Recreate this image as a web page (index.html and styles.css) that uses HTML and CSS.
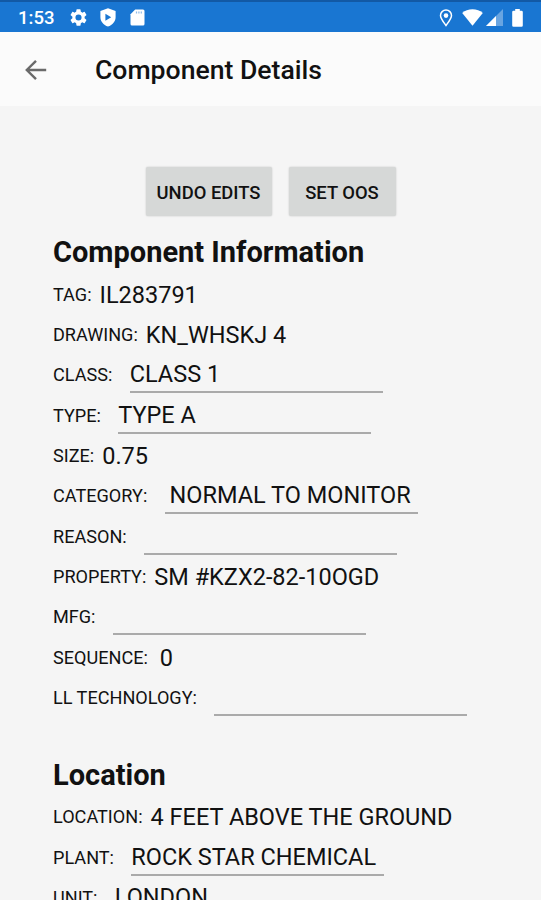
FILE: index.html
```html
<!DOCTYPE html>
<html lang="en">

<head>
  <meta charset="utf-8">
  <meta name="viewport" content="width=device-width">
  <title>Component Details</title>
  <link rel="stylesheet" href="styles.css">
</head>

<body>
  <div class="status">
    <span class="time">1:53</span>
    <svg class="gear" width="17" height="17" viewBox="2 2 20 20"><path fill="#fff" d="M19.14 12.94c.04-.3.06-.61.06-.94s-.02-.64-.07-.94l2.03-1.58a.49.49 0 0 0 .12-.61l-1.92-3.32a.49.49 0 0 0-.59-.22l-2.39.96a7 7 0 0 0-1.62-.94l-.36-2.54a.48.48 0 0 0-.48-.41h-3.84a.48.48 0 0 0-.47.41l-.36 2.54c-.59.24-1.13.57-1.62.94l-2.39-.96a.48.48 0 0 0-.59.22L2.74 8.87a.48.48 0 0 0 .12.61l2.03 1.58c-.05.3-.09.63-.09.94s.02.64.07.94l-2.03 1.58a.49.49 0 0 0-.12.61l1.92 3.32c.12.22.37.29.59.22l2.39-.96c.5.38 1.03.7 1.62.94l.36 2.54c.05.24.24.41.48.41h3.84c.24 0 .44-.17.47-.41l.36-2.54c.59-.24 1.13-.56 1.62-.94l2.39.96c.22.08.47 0 .59-.22l1.92-3.32a.48.48 0 0 0-.12-.61zM12 15.6a3.6 3.6 0 1 1 0-7.2 3.6 3.6 0 0 1 0 7.2z"/></svg>
    <svg class="shield" width="16" height="19" viewBox="0 0 16 19"><path fill="#fff" fill-rule="evenodd" d="M8 .3 15.6 3v6.2c0 4.2-3 7.6-7.6 9.4C3.4 16.800.4 13.4.4 9.2V3zM5.4 5.7v7l5.8-3.5z"/></svg>
    <svg class="sd" width="15" height="17" viewBox="0 0 15 17"><path fill="#fff" d="M5.2.5H13A1.5 1.5 0 0 1 14.5 2v13a1.5 1.5 0 0 1-1.5 1.5H2A1.5 1.5 0 0 1 .5 15V5.2z"/><path stroke="#1976d2" stroke-opacity=".5" stroke-width="1.2" d="M6.5 2.5v2M8.900 2.5v2M11.3 2.5v2"/></svg>
    <span class="space"></span>
    <svg class="pin" width="14" height="18" viewBox="0 0 14 18"><path fill="none" stroke="#fff" stroke-width="1.5" d="M7 16.500C4 12.500 1.500 9.500 1.500 6.500a5.500 5.500 0 0 1 11 0c0 3-2.500 6-5.500 10z"/><circle cx="7" cy="6.6" r="2.3" fill="#fff"/></svg>
    <svg class="wifi" width="21" height="17" viewBox="0 0 21 17"><path fill="#fff" d="M10.500 16.800.2 3.900C3 1.600 6.500.3 10.500.3s7.500 1.300 10.300 3.600z"/></svg>
    <svg class="signal" width="17" height="17" viewBox="0 0 17 17"><path fill="#fff" opacity=".35" d="M17 0v17H0z"/><path fill="#fff" d="M10 7v10H0z"/></svg>
    <svg class="battery" width="11" height="18" viewBox="0 0 11 18"><path fill="#fff" d="M3.200 0h4.600v1.800h1.700A1.300 1.300 0 0 1 10.800 3v13.500a1.300 1.300 0 0 1-1.300 1.300h-8A1.300 1.300 0 0 1 .2 16.500V3a1.300 1.300 0 0 1 1.300-1.200h1.700z"/></svg>
  </div>

  <header class="toolbar">
    <svg width="22" height="20" viewBox="0 0 22 20"><path fill="none" stroke="#6a6a6a" stroke-width="2.4" d="M21.200 10H1.800M11 .9 1.800 10l9.200 9.100"/></svg>
    <h1>Component Details</h1>
  </header>

  <main>
    <div class="buttons">
      <button class="undo">UNDO EDITS</button>
      <button class="oos">SET OOS</button>
    </div>

    <section>
      <h2>Component Information</h2>
      <div class="row"><label>TAG:</label><span class="value">IL283791</span></div>
      <div class="row"><label>DRAWING:</label><span class="value">KN_WHSKJ 4</span></div>
      <div class="row"><label>CLASS:</label><span class="picker">CLASS 1</span></div>
      <div class="row"><label>TYPE:</label><span class="picker">TYPE A</span></div>
      <div class="row"><label>SIZE:</label><span class="value">0.75</span></div>
      <div class="row"><label>CATEGORY:</label><span class="picker wide">NORMAL TO MONITOR</span></div>
      <div class="row"><label>REASON:</label><span class="picker"></span></div>
      <div class="row"><label>PROPERTY:</label><span class="value">SM #KZX2-82-10OGD</span></div>
      <div class="row"><label>MFG:</label><span class="picker"></span></div>
      <div class="row"><label>SEQUENCE:</label><span class="value seq">0</span></div>
      <div class="row"><label>LL TECHNOLOGY:</label><span class="picker"></span></div>
    </section>

    <section>
      <h2>Location</h2>
      <div class="row"><label>LOCATION:</label><span class="value">4 FEET ABOVE THE GROUND</span></div>
      <div class="row"><label>PLANT:</label><span class="picker">ROCK STAR CHEMICAL</span></div>
      <div class="row"><label>UNIT:</label><span class="picker">LONDON</span></div>
    </section>
  </main>
</body>

</html>
```
FILE: styles.css
```css
* {
  margin: 0;
  box-sizing: border-box;
}

body {
  height: 900px;
  overflow: hidden;
  background-color: #f5f5f5;
  color: #111;
  font-family: Roboto, sans-serif;
}

/* status bar */
.status {
  display: flex;
  align-items: center;
  height: 32px;
  padding: 1px 18px 0 18px;
  background-color: #1976d2;
  border-top: 2px solid #1259a5;
  color: #fff;
}

.time {
  width: 52px;
  font-size: 18.5px;
  font-weight: 500;
}

.shield {
  margin-left: 13px;
}

.sd {
  margin-left: 14px;
}

.space {
  flex: 1;
}

.wifi {
  margin-left: 9px;
}

.signal {
  margin-left: 3px;
}

.battery {
  margin-left: 9px;
}

/* toolbar */
.toolbar {
  display: flex;
  align-items: center;
  height: 74px;
  padding: 1px 25px 0;
  background-color: #fbfbfb;
}

.toolbar h1 {
  margin-left: 48px;
  font-size: 26.6px;
  font-weight: 500;
}

main {
  padding: 61px 53px 0;
}

.buttons {
  display: flex;
  justify-content: center;
  gap: 17px;
}

button {
  height: 49px;
  padding: 1px 0 0;
  border: 0;
  border-radius: 2px;
  background-color: #d6d8d7;
  box-shadow: 0 0 2px rgba(0, 0, 0, .2);
  color: #111;
  font-family: inherit;
  font-size: 18.4px;
  font-weight: 500;
}

.undo {
  width: 126px;
}

.oos {
  width: 107px;
}

/* details */
section h2 {
  padding-top: 16px;
  height: 58px;
  font-size: 29px;
  font-weight: 700;
  line-height: 40px;
  white-space: nowrap;
}

section + section h2 {
  padding-top: 37px;
  height: 79px;
}

.row {
  display: flex;
  align-items: center;
  height: 40.35px;
  white-space: nowrap;
}

.row label {
  font-size: 18.1px;
}

.value {
  margin-left: 8px;
  padding-top: 1px;
  font-size: 23.5px;
}

.seq {
  margin-left: 12px;
}

.picker {
  width: 253px;
  height: 37px;
  margin-left: 17.3px;
  border-bottom: 2px solid #aaa;
  font-size: 23.5px;
  line-height: 37.5px;
}

.wide {
  padding-left: 5px;
}
```
